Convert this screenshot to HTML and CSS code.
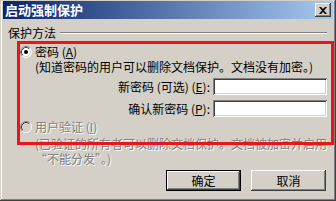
FILE: index.html
```html
<!DOCTYPE html>
<html lang="zh-CN">
<head>
<meta charset="utf-8">
<title>启动强制保护</title>
<link rel="stylesheet" href="styles.css">
</head>
<body>
<div class="window">
  <div class="titlebar">
    <span class="title">启动强制保护</span>
    <span class="close">
      <svg width="8" height="7" viewBox="0 0 8 7"><path d="M0 0h2l2 2 2-2h2L5 3.5 8 7H6L4 5 2 7H0l3-3.5z" fill="#000"/></svg>
    </span>
  </div>
  <div class="body">
    <div class="group-head"><span>保护方法</span><span class="etch"></span></div>
    <div class="option">
      <svg class="radio" width="12" height="12" viewBox="0 0 12 12">
        <circle cx="6" cy="6" r="5" fill="#fff"/>
        <path d="M9.89 2.11A5.5 5.5 0 0 0 2.11 9.89" fill="none" stroke="#808080"/>
        <path d="M2.11 9.89A5.5 5.5 0 0 0 9.89 2.11" fill="none" stroke="#fff"/>
        <path d="M9.18 2.82A4.5 4.5 0 0 0 2.82 9.18" fill="none" stroke="#404040"/>
        <path d="M2.82 9.18A4.5 4.5 0 0 0 9.18 2.82" fill="none" stroke="#d4d0c8"/>
        <circle cx="6" cy="6" r="2" fill="#000"/>
      </svg>
      <span>密码 (<u>A</u>)</span>
    </div>
    <div class="desc">(知道密码的用户可以删除文档保护。文档没有加密。)</div>
    <div class="field"><span class="label">新密码 (可选) (<u>E</u>):</span><span class="input"></span></div>
    <div class="field"><span class="label">确认新密码 (<u>P</u>):</span><span class="input"></span></div>
    <div class="option disabled">
      <svg class="radio" width="12" height="12" viewBox="0 0 12 12">
        <circle cx="6" cy="6" r="5" fill="#d4d0c8"/>
        <path d="M9.89 2.11A5.5 5.5 0 0 0 2.11 9.89" fill="none" stroke="#808080"/>
        <path d="M2.11 9.89A5.5 5.5 0 0 0 9.89 2.11" fill="none" stroke="#fff"/>
        <path d="M9.18 2.82A4.5 4.5 0 0 0 2.82 9.18" fill="none" stroke="#404040"/>
        <path d="M2.82 9.18A4.5 4.5 0 0 0 9.18 2.82" fill="none" stroke="#d4d0c8"/>
      </svg>
      <span>用户验证 (<u>I</u>)</span>
    </div>
    <div class="desc desc-two disabled">(已验证的所有者可以删除文档保护。文档被加密并启用<br><span class="fw">“</span>不能分发<span class="fw">”</span>。)</div>
    <div class="buttons">
      <span class="btn btn-default"><span class="btn-inner">确定</span></span>
      <span class="btn"><span class="btn-inner">取消</span></span>
    </div>
  </div>
  <div class="highlight"></div>
</div>
</body>
</html>
```
FILE: styles.css
```css
html, body {
  margin: 0;
  padding: 0;
  background: #d4d0c8;
}
body {
  width: 336px;
  height: 201px;
  overflow: hidden;
  font-family: "Noto Sans CJK SC", "Noto Sans", sans-serif;
  font-size: 12px;
  color: #000;
}
.window {
  position: relative;
  box-sizing: border-box;
  width: 336px;
  height: 201px;
  padding: 1px 3px 4px 3px;
  background: #d4d0c8;
  box-shadow: inset -1px -1px #404040, inset 1px 1px #d4d0c8, inset -2px -2px #808080, inset 2px 2px #fff;
  overflow: hidden;
}
.titlebar {
  display: flex;
  align-items: center;
  justify-content: space-between;
  height: 18px;
  padding: 0 2px;
  background: linear-gradient(to right, #0a246a, #a6caf0);
}
.title {
  color: #fff;
  font-weight: 700;
  font-size: 13px;
  line-height: 18px;
}
.close {
  display: flex;
  align-items: center;
  justify-content: center;
  box-sizing: border-box;
  width: 16px;
  height: 14px;
  background: #d4d0c8;
  box-shadow: inset -1px -1px #404040, inset 1px 1px #fff, inset -2px -2px #808080;
}
.body {
  padding: 0 6px 0 5px;
}
.group-head {
  display: flex;
  align-items: center;
  margin-top: 7px;
  height: 14px;
  line-height: 14px;
}
.etch {
  flex: 1;
  margin-left: 4px;
  height: 0;
  border-top: 1px solid #808080;
  border-bottom: 1px solid #fff;
}
.option {
  display: flex;
  align-items: center;
  margin-top: 5px;
  margin-left: 12px;
  height: 14px;
  line-height: 14px;
  gap: 3px;
}
.option + .desc {
  margin-top: 1px;
}
.desc {
  margin-left: 27px;
  line-height: 14px;
  white-space: nowrap;
}
.desc-two {
  line-height: 15px;
  margin-top: 2px !important;
}
.fw {
  font-feature-settings: "fwid";
}
.field {
  display: flex;
  justify-content: flex-end;
  align-items: center;
  margin-top: 4px;
  height: 17px;
}
.field + .field {
  margin-top: 5px;
}
.label {
  margin-right: 3px;
  line-height: 17px;
}
.input {
  box-sizing: border-box;
  width: 114px;
  height: 17px;
  background: #fff;
  box-shadow: inset 1px 1px #808080, inset -1px -1px #fff, inset 2px 2px #404040, inset -2px -2px #d4d0c8;
}
.field + .option {
  margin-top: 3px;
}
.disabled {
  color: #808080;
  text-shadow: 1px 1px #fff;
}
.buttons {
  display: flex;
  justify-content: flex-end;
  gap: 10px;
  margin-top: 4px;
  margin-right: 1px;
}
.btn {
  box-sizing: border-box;
  width: 75px;
  height: 21px;
  background: #d4d0c8;
  box-shadow: inset -1px -1px #404040, inset 1px 1px #fff, inset -2px -2px #808080;
}
.btn-inner {
  display: flex;
  align-items: center;
  justify-content: center;
  height: 100%;
  line-height: 21px;
}
.btn-default {
  border: 1px solid #000;
}
.highlight {
  position: absolute;
  left: 17px;
  top: 41px;
  box-sizing: border-box;
  width: 317px;
  height: 104px;
  border: 3px solid #e8161b;
}
```
